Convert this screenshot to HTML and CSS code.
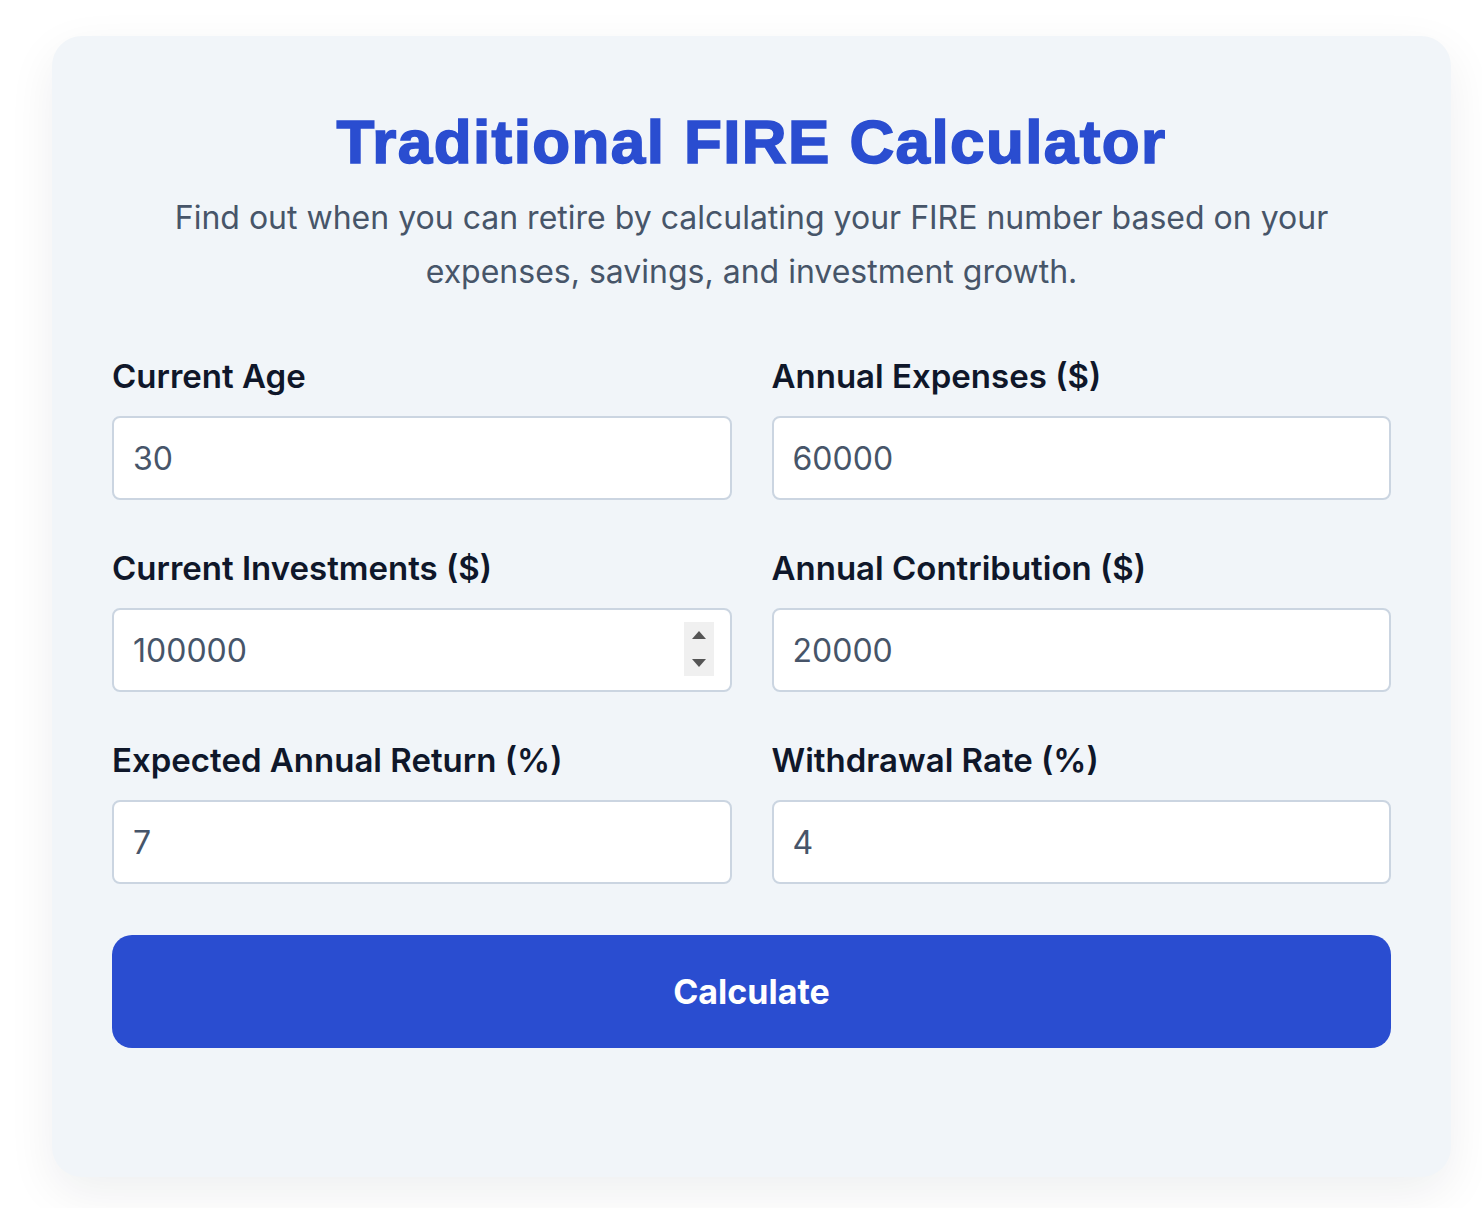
FILE: index.html
```html
<!DOCTYPE html>
<html lang="en">
<head>
  <meta charset="UTF-8">
  <title>Traditional FIRE Calculator</title>
  <meta name="viewport" content="width=device-width, initial-scale=1.0">
  <link rel="stylesheet" href="styles.css">
</head>
<body>
  <main class="card">
    <header class="intro">
      <h1>Traditional FIRE Calculator</h1>
      <p>Find out when you can retire by calculating your FIRE number based on your expenses, savings, and investment growth.</p>
    </header>
    <form id="fireForm" class="fire-form" autocomplete="off">
      <div class="field">
        <label for="age">Current Age</label>
        <input type="text" id="age" value="30">
      </div>
      <div class="field">
        <label for="expenses">Annual Expenses ($)</label>
        <input type="text" id="expenses" value="60000">
      </div>
      <div class="field">
        <label for="investments">Current Investments ($)</label>
        <div class="input-wrap">
          <input type="text" id="investments" value="100000">
          <span class="spinner"><i class="up"></i><i class="down"></i></span>
        </div>
      </div>
      <div class="field">
        <label for="contribution">Annual Contribution ($)</label>
        <input type="text" id="contribution" value="20000">
      </div>
      <div class="field">
        <label for="return">Expected Annual Return (%)</label>
        <input type="text" id="return" value="7">
      </div>
      <div class="field">
        <label for="withdrawal">Withdrawal Rate (%)</label>
        <input type="text" id="withdrawal" value="4">
      </div>
      <button type="submit">Calculate</button>
    </form>
  </main>
  <script>
    document.getElementById('fireForm').onsubmit = function(e) {
      e.preventDefault();
    };
  </script>
</body>
</html>
```

FILE: styles.css
```css
body {
  margin: 0;
  padding: 36px 31px 31px 52px;
  background: #fff;
  font-family: Inter, 'Noto Sans', Arial, sans-serif;
  color: #0f172a;
}
.card {
  background: #f1f5f9;
  border-radius: 30px;
  box-shadow: 0 16px 48px rgba(15, 23, 42, 0.07);
  padding: 70px 60px 129px 60px;
}
.intro {
  text-align: center;
}
.intro h1 {
  margin: 0;
  font-family: 'Liberation Sans', Arial, sans-serif;
  font-size: 62px;
  font-weight: 700;
  line-height: 1.15;
  letter-spacing: 1.4px;
  color: #2a4dd0;
  -webkit-text-stroke: 1.6px #2a4dd0;
}
.intro p {
  margin: 14px auto 0 auto;
  max-width: 1180px;
  font-size: 32px;
  line-height: 54px;
  color: #475569;
}
.fire-form {
  display: grid;
  grid-template-columns: 1fr 1fr;
  column-gap: 40px;
  row-gap: 48px;
  margin-top: 57px;
}
.field label {
  display: block;
  font-size: 33px;
  font-weight: 600;
  line-height: 40px;
  margin-bottom: 20px;
  color: #0f172a;
}
.field input {
  display: block;
  width: 100%;
  box-sizing: border-box;
  height: 84px;
  padding: 0 19px;
  border: 2px solid #cbd5e1;
  border-radius: 8px;
  background: #fff;
  font-family: inherit;
  font-size: 32px;
  color: #475569;
}
.input-wrap {
  position: relative;
}
.spinner {
  position: absolute;
  right: 18px;
  top: 14px;
  width: 30px;
  height: 54px;
  background: #f0f0f0;
}
.spinner i {
  position: absolute;
  left: 8px;
  width: 0;
  height: 0;
  border-left: 7px solid transparent;
  border-right: 7px solid transparent;
}
.spinner .up {
  top: 9px;
  border-bottom: 8px solid #555;
}
.spinner .down {
  bottom: 9px;
  border-top: 8px solid #555;
}
button {
  grid-column: 1 / -1;
  margin-top: 3px;
  height: 113px;
  border: none;
  border-radius: 20px;
  background: #2a4dd0;
  color: #fff;
  font-family: inherit;
  font-size: 34px;
  font-weight: 700;
  cursor: pointer;
}
button:hover {
  background: #2443b8;
}
```
